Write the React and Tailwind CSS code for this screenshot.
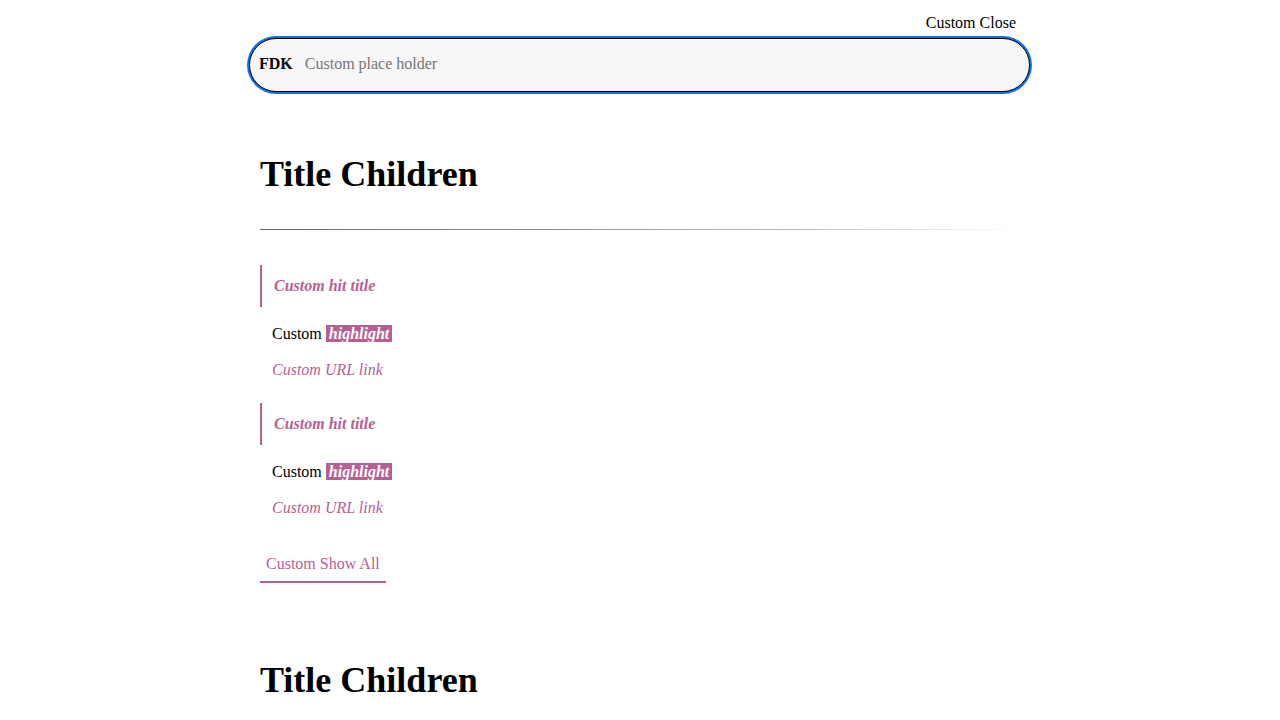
import React from 'react';

const hits = [1, 2];

const Hit = () => (
  <div>
    <div className="border-l-2 border-[#b75f93] pl-[12px] py-[12px] leading-[18px]">
      <span className="font-bold italic text-[#b75f93]">Custom hit title</span>
    </div>
    <div className="mt-[18px] pl-[12px] leading-[18px]">
      Custom{' '}
      <span className="bg-[#b75f93] px-[3px] font-bold italic text-white">highlight</span>
    </div>
    <div className="mt-[18px] pl-[12px] leading-[18px] italic text-[#b75f93]">Custom URL link</div>
  </div>
);

const Section = () => (
  <section className="px-[10px]">
    <h1 className="text-[36px] font-bold leading-[40px]">Title Children</h1>
    <div className="mt-[35px] h-px bg-gradient-to-r from-[#666] via-[#bbb] via-70% to-[#fff]" />
    <div className="mt-[35px] flex flex-col gap-[24px]">
      {hits.map((h) => (
        <Hit key={h} />
      ))}
    </div>
    <div className="mt-[30px]">
      <button className="border-b-2 border-[#b75f93] px-[6px] py-[8px] leading-[18px] text-[#b75f93]">
        Custom Show All
      </button>
    </div>
  </section>
);

export default function App() {
  return (
    <div className="min-h-screen bg-white text-black text-[16px] font-['Liberation_Serif',serif]">
      <div className="mx-auto w-[780px]">
        <div className="flex h-[38px] justify-end pt-[7px]">
          <button className="pr-[14px] leading-[18px]">Custom Close</button>
        </div>
        <div className="-ml-[1px] flex h-[54px] items-center rounded-full border border-black bg-[#f7f7f7] pb-[2px] pl-[9px] ring-2 ring-[#0f6fee]">
          <span className="font-bold">FDK</span>
          <input
            className="ml-[12px] flex-1 bg-transparent outline-none placeholder:text-[#757575]"
            placeholder="Custom place holder"
          />
        </div>
        <div className="mt-[62px] flex flex-col gap-[77px]">
          <Section />
          <Section />
        </div>
      </div>
    </div>
  );
}
